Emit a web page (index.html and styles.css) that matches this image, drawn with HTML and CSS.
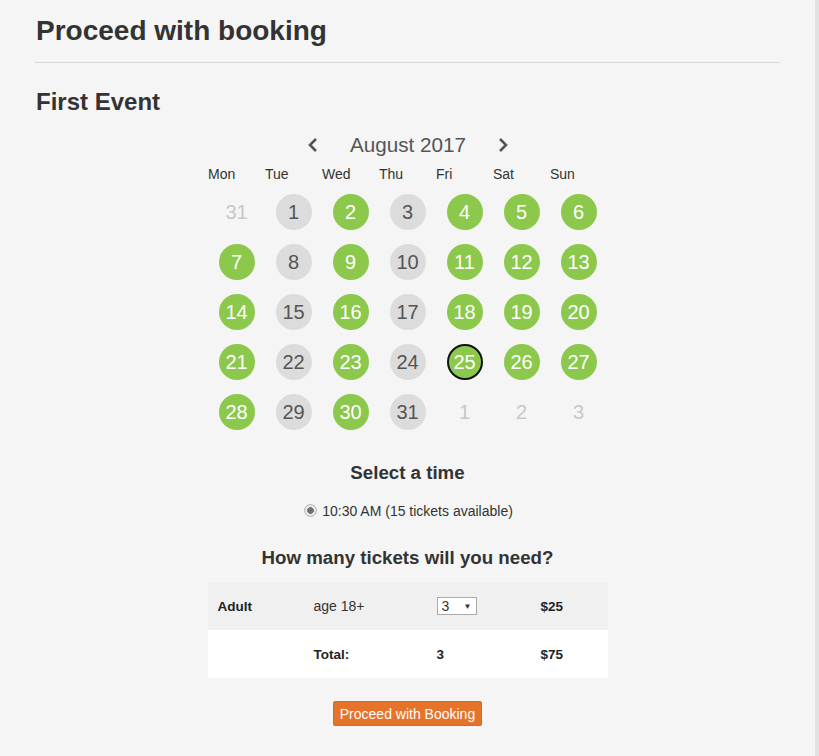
FILE: index.html
```html
<!DOCTYPE html>
<html>
<head>
<meta charset="utf-8">
<link rel="stylesheet" href="styles.css">
</head>
<body>
<div class="page">
  <h1 class="title">Proceed with booking</h1>
  <hr class="rule">
  <h2 class="event">First Event</h2>

  <div class="calendar">
    <div class="cal-head">
      <svg class="chev" width="10" height="16" viewBox="0 0 10 16"><polyline points="8,2 2,8 8,14" fill="none" stroke="#555" stroke-width="2.6"/></svg>
      <span class="month">August 2017</span>
      <svg class="chev" width="10" height="16" viewBox="0 0 10 16"><polyline points="2,2 8,8 2,14" fill="none" stroke="#555" stroke-width="2.6"/></svg>
    </div>
    <div class="week">
      <span>Mon</span><span>Tue</span><span>Wed</span><span>Thu</span><span>Fri</span><span>Sat</span><span>Sun</span>
    </div>
    <div class="days">
      <div class="cell"><span class="day out">31</span></div>
      <div class="cell"><span class="day off">1</span></div>
      <div class="cell"><span class="day on">2</span></div>
      <div class="cell"><span class="day off">3</span></div>
      <div class="cell"><span class="day on">4</span></div>
      <div class="cell"><span class="day on">5</span></div>
      <div class="cell"><span class="day on">6</span></div>

      <div class="cell"><span class="day on">7</span></div>
      <div class="cell"><span class="day off">8</span></div>
      <div class="cell"><span class="day on">9</span></div>
      <div class="cell"><span class="day off">10</span></div>
      <div class="cell"><span class="day on">11</span></div>
      <div class="cell"><span class="day on">12</span></div>
      <div class="cell"><span class="day on">13</span></div>

      <div class="cell"><span class="day on">14</span></div>
      <div class="cell"><span class="day off">15</span></div>
      <div class="cell"><span class="day on">16</span></div>
      <div class="cell"><span class="day off">17</span></div>
      <div class="cell"><span class="day on">18</span></div>
      <div class="cell"><span class="day on">19</span></div>
      <div class="cell"><span class="day on">20</span></div>

      <div class="cell"><span class="day on">21</span></div>
      <div class="cell"><span class="day off">22</span></div>
      <div class="cell"><span class="day on">23</span></div>
      <div class="cell"><span class="day off">24</span></div>
      <div class="cell"><span class="day on selected">25</span></div>
      <div class="cell"><span class="day on">26</span></div>
      <div class="cell"><span class="day on">27</span></div>

      <div class="cell"><span class="day on">28</span></div>
      <div class="cell"><span class="day off">29</span></div>
      <div class="cell"><span class="day on">30</span></div>
      <div class="cell"><span class="day off">31</span></div>
      <div class="cell"><span class="day out">1</span></div>
      <div class="cell"><span class="day out">2</span></div>
      <div class="cell"><span class="day out">3</span></div>
    </div>
  </div>

  <h3 class="section">Select a time</h3>
  <div class="time">
    <span class="radio"></span>
    <span>10:30 AM (15 tickets available)</span>
  </div>

  <h3 class="section tickets-title">How many tickets will you need?</h3>
  <div class="tickets">
    <div class="row shaded">
      <span class="strong">Adult</span>
      <span>age 18+</span>
      <span><span class="select"><span>3</span><span class="arrow">&#9660;</span></span></span>
      <span class="strong">$25</span>
    </div>
    <div class="row">
      <span></span>
      <span class="strong">Total:</span>
      <span class="strong">3</span>
      <span class="strong">$75</span>
    </div>
  </div>

  <div class="actions">
    <button class="btn">Proceed with Booking</button>
  </div>
</div>
</body>
</html>
```

FILE: styles.css
```css
html, body {
  margin: 0;
  padding: 0;
}
body {
  background: #f5f5f5;
  font-family: "Liberation Sans", Arial, sans-serif;
  color: #333;
}
.page {
  width: 745px;
  min-height: 756px;
  box-sizing: border-box;
  padding: 15px 0 0 0;
  margin-left: 35px;
}
body::after {
  content: "";
  position: fixed;
  top: 0;
  right: 0;
  width: 4px;
  height: 100%;
  background: #e1e1e1;
}
.title {
  margin: 0 0 0 1px;
  font-size: 28px;
  line-height: 32px;
  font-weight: bold;
  color: #333;
}
.rule {
  margin: 15px 0 0 0;
  border: 0;
  height: 1px;
  background: #d9d9d9;
}
.event {
  margin: 25px 0 0 1px;
  font-size: 24px;
  line-height: 28px;
  font-weight: bold;
  color: #333;
}
.calendar {
  width: 399px;
  margin: 17px auto 0 auto;
}
.cal-head {
  display: flex;
  justify-content: center;
  align-items: center;
  gap: 32px;
  height: 24px;
  padding-left: 1px;
}
.chev {
  display: block;
}
.month {
  font-size: 20.7px;
  line-height: 24px;
  color: #555;
}
.week {
  display: grid;
  grid-template-columns: repeat(7, 57px);
  margin-top: 9px;
  font-size: 14px;
  line-height: 16px;
  color: #333;
}
.days {
  display: grid;
  grid-template-columns: repeat(7, 57px);
  grid-auto-rows: 50px;
  margin-top: 5px;
}
.cell {
  display: flex;
  align-items: center;
  justify-content: center;
}
.day {
  width: 36px;
  height: 36px;
  border-radius: 50%;
  display: flex;
  align-items: center;
  justify-content: center;
  font-size: 20px;
  box-sizing: border-box;
}
.day.on {
  background: #8cc84b;
  color: #fff;
}
.day.off {
  background: #dcdcdc;
  color: #555;
}
.day.out {
  color: #c8c8c8;
}
.day.selected {
  border: 2px solid #111;
}
.section {
  margin: 25px 0 0 0;
  text-align: center;
  font-size: 18.7px;
  line-height: 22px;
  font-weight: bold;
  color: #333;
}
.time {
  display: flex;
  justify-content: center;
  align-items: center;
  gap: 5px;
  margin-top: 17px;
  height: 20px;
  font-size: 14px;
  color: #333;
  padding-left: 2px;
}
.radio {
  width: 11px;
  height: 11px;
  border-radius: 50%;
  border: 1px solid #b5b5b5;
  background: radial-gradient(circle, #6f6f6f 0 3px, #e6e6e6 3.6px);
  margin-top: -2px;
}
.tickets-title {
  margin-top: 26px;
}
.tickets {
  width: 400px;
  margin: 13px auto 0 auto;
}
.row {
  display: grid;
  grid-template-columns: 96px 123px 104px 77px;
  height: 48px;
  align-items: center;
  background: #fff;
  font-size: 14px;
  color: #333;
}
.row.shaded {
  background: #f0f0f0;
}
.row > span {
  padding-left: 10px;
}
.strong {
  font-weight: bold;
  color: #222;
  font-size: 13.5px;
}
.select {
  display: inline-flex;
  align-items: center;
  justify-content: space-between;
  width: 40px;
  height: 18px;
  box-sizing: border-box;
  border: 1px solid #a9a9a9;
  background: #fff;
  padding: 0 4px 0 4px;
  font-size: 14px;
  vertical-align: middle;
}
.select .arrow {
  font-size: 8px;
  color: #333;
}
.actions {
  display: flex;
  justify-content: center;
  margin-top: 23px;
}
.btn {
  background: #e6732a;
  color: #fff;
  border: 1px solid #d9681f;
  border-radius: 2px;
  font-family: "Liberation Sans", Arial, sans-serif;
  font-size: 14px;
  height: 25px;
  width: 149px;
  padding: 0;
}
```
